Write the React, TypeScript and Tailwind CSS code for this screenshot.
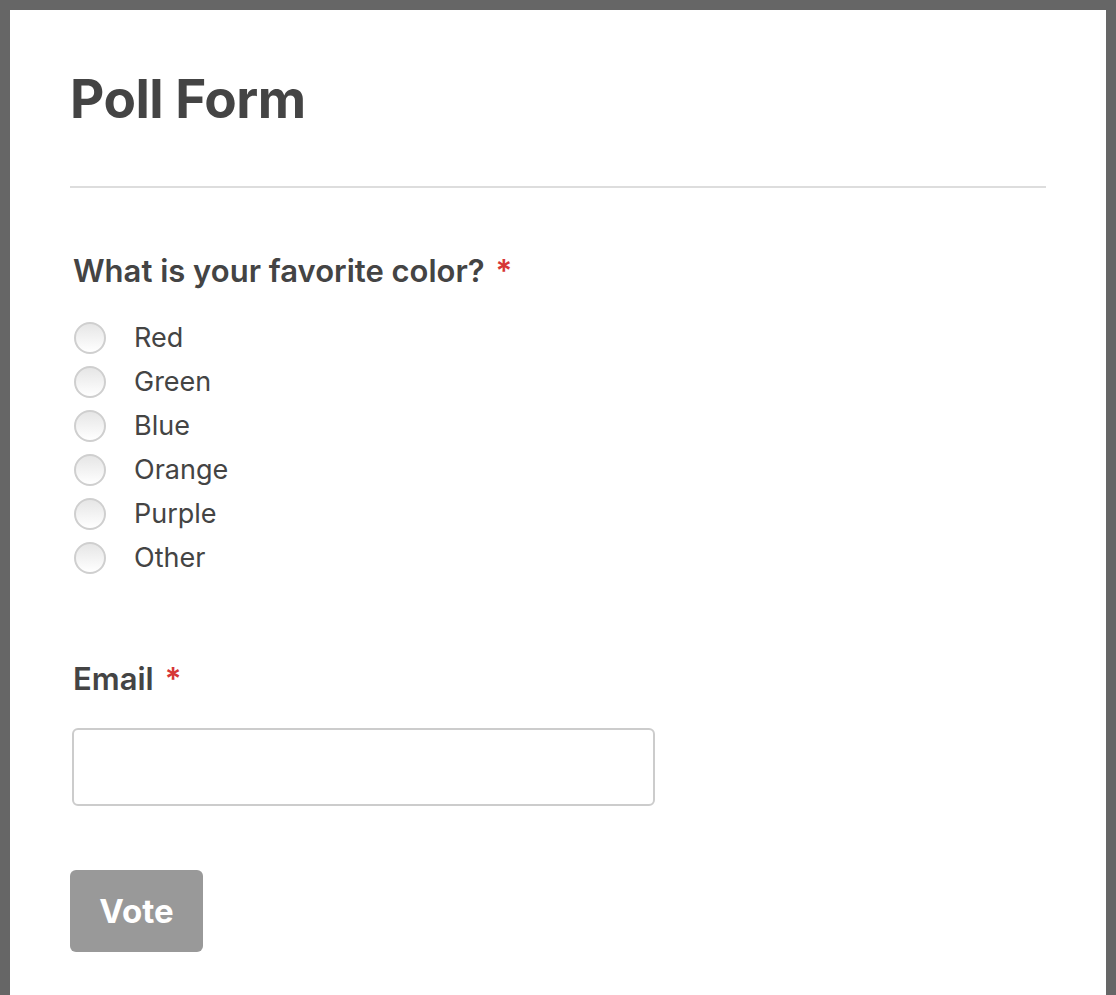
import { useState } from 'react';

const options = ['Red', 'Green', 'Blue', 'Orange', 'Purple', 'Other'];

function Radio({ checked }: { checked: boolean }) {
  return (
    <span className="relative flex h-[32px] w-[32px] shrink-0 items-center justify-center rounded-full border-2 border-[#cfcfcf] bg-gradient-to-b from-[#e6e6e6] to-white">
      {checked && <span className="h-[12px] w-[12px] rounded-full bg-[#444]" />}
    </span>
  );
}

export default function App() {
  const [choice, setChoice] = useState<string | null>(null);
  const [email, setEmail] = useState('');

  return (
    <div
      className="min-h-[995px] bg-[#666666] px-[10px] pt-[10px]"
      style={{ fontFamily: 'Inter, "Noto Sans", sans-serif' }}
    >
      <div className="min-h-[985px] bg-white px-[60px] pt-[63px] text-[#444444]">
        <h1 className="text-[53px] font-bold leading-[1] tracking-[-0.5px]">Poll Form</h1>
        <div className="mt-[60px] h-[2px] bg-[#dddddd]" />

        {/* Favorite color */}
        <div className="mt-[64px] pl-[3px]">
          <div className="flex items-center text-[31px] font-semibold leading-[1.2]">
            What is your favorite color?
            <span className="ml-[11px] text-[#d63637]">*</span>
          </div>
          <div className="mt-[27px] flex flex-col">
            {options.map((o) => (
              <label
                key={o}
                className="flex h-[44px] cursor-pointer items-center gap-[28px] pl-[1px] text-[27px]"
                onClick={() => setChoice(o)}
              >
                <Radio checked={choice === o} />
                <span>{o}</span>
              </label>
            ))}
          </div>
        </div>

        {/* Email */}
        <div className="mt-[80px] pl-[3px]">
          <div className="flex items-center text-[31px] font-semibold leading-[1.2]">
            Email
            <span className="ml-[11px] text-[#d63637]">*</span>
          </div>
          <input
            type="email"
            value={email}
            onChange={(e) => setEmail(e.target.value)}
            className="mt-[31px] block h-[78px] w-[583px] -ml-[1px] rounded-[6px] border-2 border-[#cccccc] px-4 text-[26px] outline-none"
          />
        </div>

        <button className="mt-[64px] flex h-[82px] w-[133px] items-center justify-center rounded-[6px] bg-[#999999] text-[33px] font-bold text-white">
          Vote
        </button>
      </div>
    </div>
  );
}
